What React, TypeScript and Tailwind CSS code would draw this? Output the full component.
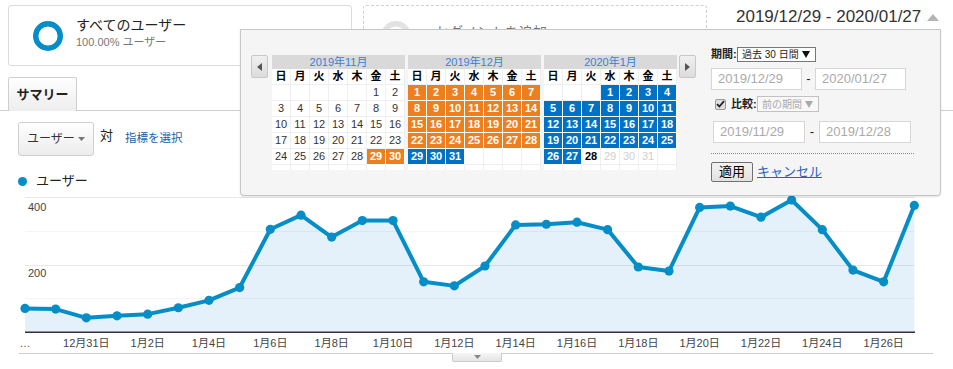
import React from "react"

// daily users for the 30 day window (12/29 - 1/27)
const users = [70, 68, 42, 48, 53, 72, 94, 132, 305, 347, 282, 331, 331, 149, 137, 196, 318, 320, 326, 304, 193, 181, 370, 374, 341, 392, 304, 184, 149, 376]

const X0 = 25
const X1 = 914.3
const BASE = 332
const PER_UNIT = 0.33675

const px = (i: number) => X0 + (i * (X1 - X0)) / (users.length - 1)
const py = (v: number) => BASE - v * PER_UNIT

const dayLabel = (i: number) => (i < 3 ? `12月${29 + i}日` : `1月${i - 2}日`)

type Kind = "blank" | "plain" | "orange" | "blue" | "today" | "future"
type Cell = { d?: number; k: Kind }

function buildMonth(startDow: number, days: number, kind: (d: number) => Kind): Cell[][] {
  const cells: Cell[] = []
  for (let i = 0; i < startDow; i++) cells.push({ k: "blank" })
  for (let d = 1; d <= days; d++) cells.push({ d, k: kind(d) })
  while (cells.length < 35) cells.push({ k: "blank" })
  const rows: Cell[][] = []
  for (let r = 0; r < 5; r++) rows.push(cells.slice(r * 7, r * 7 + 7))
  return rows
}

const months = [
  { title: "2019年11月", rows: buildMonth(5, 30, (d) => (d >= 29 ? "orange" : "plain")) },
  { title: "2019年12月", rows: buildMonth(0, 31, (d) => (d <= 28 ? "orange" : "blue")) },
  {
    title: "2020年1月",
    rows: buildMonth(3, 31, (d) => (d <= 27 ? "blue" : d === 28 ? "today" : "future")),
  },
]

const weekdays = ["日", "月", "火", "水", "木", "金", "土"]

const cellClass: Record<Kind, string> = {
  blank: "bg-white border-[#efefef]",
  plain: "bg-white border-[#efefef] text-[#333]",
  orange: "bg-[#ee7f1f] border-white text-white font-bold",
  blue: "bg-[#0072c6] border-white text-white font-bold",
  today: "bg-white border-[#efefef] text-black font-bold",
  future: "bg-white border-[#efefef] text-[#cfcfcf]",
}

function Month({ title, rows }: { title: string; rows: Cell[][] }) {
  return (
    <div className="w-[133px]">
      <div className="flex h-[14px] items-center justify-center bg-[#d9d9d9] text-[11px] leading-none text-[#3a7fd8]">
        {title}
      </div>
      <div className="grid grid-cols-7">
        {weekdays.map((w) => (
          <div
            key={w}
            className="flex h-[16px] items-center justify-center border-r border-b border-[#efefef] bg-white text-[11px] font-bold leading-none text-black"
          >
            {w}
          </div>
        ))}
        {rows.flat().map((c, i) => (
          <div
            key={i}
            className={`flex h-[16px] items-center justify-center border-r border-b text-[11px] leading-none ${cellClass[c.k]}`}
          >
            {c.d}
          </div>
        ))}
        {weekdays.map((w) => (
          <div key={"e" + w} className="h-[5px] border-r border-[#efefef] bg-white" />
        ))}
      </div>
    </div>
  )
}

function NavButton({ dir }: { dir: "prev" | "next" }) {
  return (
    <div className="flex h-[23px] w-[17px] items-center justify-center rounded-[2px] border border-[#c8c8c8] bg-gradient-to-b from-[#f0f0f0] to-[#dcdcdc]">
      <svg width="5" height="8" viewBox="0 0 5 8">
        {dir === "prev" ? <polygon points="5,0 5,8 0,4" fill="#555" /> : <polygon points="0,0 0,8 5,4" fill="#555" />}
      </svg>
    </div>
  )
}

function Caret({ color }: { color: string }) {
  return (
    <svg width="8" height="7" viewBox="0 0 8 7">
      <polygon points="0,0 8,0 4,7" fill={color} />
    </svg>
  )
}

function DateBox({ value, w }: { value: string; w: string }) {
  return (
    <div className={`flex h-[22px] shrink-0 items-center border border-[#d6d6d6] bg-white pl-[6px] text-[13px] text-[#aaa] ${w}`}>
      {value}
    </div>
  )
}

function DatePicker() {
  return (
    <div className="absolute left-[240px] top-[29px] flex h-[167px] w-[701px] rounded-b-[4px] border border-[#c6c6c6] bg-[#f5f5f5] shadow-[0_1px_2px_rgba(0,0,0,0.12)]">
      <div className="ml-[10px] mt-[25px]">
        <NavButton dir="prev" />
      </div>
      <div className="ml-[4px] mt-[25px] flex gap-[3px]">
        {months.map((m) => (
          <Month key={m.title} title={m.title} rows={m.rows} />
        ))}
      </div>
      <div className="ml-[2px] mt-[25px]">
        <NavButton dir="next" />
      </div>

      <div className="ml-[15px] mt-[17px] flex w-[203px] shrink-0 flex-col whitespace-nowrap text-[11px] text-[#222]">
        <div className="flex h-[15px] items-center">
          <span className="w-[26px] shrink-0 font-bold">期間:</span>
          <div className="flex h-[15px] w-[79px] shrink-0 items-center justify-between border border-[#777] bg-white pl-[4px] pr-[5px] text-[10px]">
            <span>過去 30 日間</span>
            <Caret color="#111" />
          </div>
        </div>

        <div className="mt-[6px] flex items-center">
          <DateBox value="2019/12/29" w="w-[91px]" />
          <span className="w-[13px] shrink-0 text-center text-[13px]">-</span>
          <DateBox value="2020/01/27" w="w-[91px]" />
        </div>

        <div className="mt-[6px] flex h-[16px] items-center">
          <span className="ml-[4px] flex h-[11px] w-[11px] shrink-0 items-center justify-center rounded-[2px] border border-[#9a9a9a] bg-[#dedede]">
            <svg width="9" height="8" viewBox="0 0 9 8">
              <path d="M1 4.2 L3.4 6.5 L8 1.2" fill="none" stroke="#222" strokeWidth="1.8" />
            </svg>
          </span>
          <span className="ml-[5px] w-[26px] shrink-0 font-bold">比較:</span>
          <div className="flex h-[16px] w-[62px] shrink-0 items-center justify-between border border-[#c2c2c2] bg-[#f8f8f8] pl-[4px] pr-[5px] text-[10px] text-[#aaa]">
            <span>前の期間</span>
            <Caret color="#aaa" />
          </div>
        </div>

        <div className="ml-[2px] mt-[9px] flex items-center">
          <DateBox value="2019/11/29" w="w-[92px]" />
          <span className="w-[14px] shrink-0 text-center text-[13px]">-</span>
          <DateBox value="2019/12/28" w="w-[92px]" />
        </div>

        <div className="mt-[10px] border-t border-dotted border-[#8a8a8a]" />

        <div className="mt-[8px] flex items-center">
          <button className="flex h-[20px] w-[42px] items-center justify-center rounded-[2px] border border-[#707070] bg-gradient-to-b from-[#f2f2f2] to-[#e2e2e2] text-[13px] text-black">
            適用
          </button>
          <a className="ml-[4px] text-[13px] text-[#2b5fc4] underline">キャンセル</a>
        </div>
      </div>
    </div>
  )
}

function UsersChart() {
  const pts = users.map((v, i) => [px(i), py(v)] as const)
  const line = pts.map(([x, y]) => `${x},${y}`).join(" ")
  const area = `M${X0},${BASE} L${line.replace(/ /g, " L")} L${X1},${BASE} Z`

  return (
    <svg className="mt-px block" width={953} height={160} viewBox="0 190 953 160">
      <path d={area} fill="#e4f1fa" />
      {[197.5, 265.5].map((y) => (
        <line key={y} x1={X0} x2={X1} y1={y} y2={y} stroke="#000" strokeOpacity={0.09} />
      ))}
      {[231.5, 298.5].map((y) => (
        <line key={y} x1={X0} x2={X1} y1={y} y2={y} stroke="#000" strokeOpacity={0.045} />
      ))}
      <text x={28} y={210.5} fontSize={11} fill="#444">400</text>
      <text x={28} y={277} fontSize={11} fill="#444">200</text>
      <line x1={X0} x2={915} y1={332.3} y2={332.3} stroke="#333" strokeWidth={1.6} />
      <polyline points={line} fill="none" stroke="#058dc7" strokeWidth={4} strokeLinejoin="round" />
      {pts.map(([x, y], i) => (
        <circle key={i} cx={x} cy={y} r={4.6} fill="#058dc7" />
      ))}
      <text x={25} y={347} fontSize={11} fill="#555" textAnchor="middle">…</text>
      {users.map((_, i) =>
        i % 2 === 0 && i > 0 ? (
          <text key={i} x={px(i)} y={347} fontSize={11} fill="#444" textAnchor="middle">
            {dayLabel(i)}
          </text>
        ) : null
      )}
    </svg>
  )
}

export default function App() {
  return (
    <div className="relative h-[369px] w-[953px] overflow-hidden bg-white font-['Liberation_Sans','Noto_Sans_CJK_JP',sans-serif] text-[#333]">
      {/* segments + date range */}
      <div className="flex items-start pl-[8px] pt-[5px]">
        <div className="flex h-[61px] w-[344px] rounded-[3px] border border-[#dcdcdc]">
          <svg className="ml-[23px] mt-[14px]" width="32" height="32" viewBox="0 0 32 32">
            <circle cx="16" cy="16" r="12.3" fill="none" stroke="#058dc7" strokeWidth="5.4" />
          </svg>
          <div className="ml-[12px] mt-[10px]">
            <div className="text-[14px] leading-[18px] text-[#222]">すべてのユーザー</div>
            <div className="mt-[1px] text-[11px] leading-[14px] text-[#777]">100.00% ユーザー</div>
          </div>
        </div>
        <div className="ml-[11px] flex h-[61px] w-[344px] rounded-[3px] border border-dashed border-[#d0d0d0]">
          <svg className="ml-[16px] mt-[14px]" width="32" height="32" viewBox="0 0 32 32">
            <circle cx="16" cy="16" r="12.3" fill="none" stroke="#e2e2e2" strokeWidth="5.4" />
          </svg>
          <div className="ml-[23px] mt-[17px] text-[14px] leading-[18px] text-[#777]">セグメントを追加</div>
        </div>
        <div className="ml-[29px] mt-[2px] flex items-center">
          <span className="text-[17px] leading-[20px] text-[#333]">2019/12/29 - 2020/01/27</span>
          <svg className="ml-[6px]" width="12" height="8" viewBox="0 0 12 8">
            <polygon points="0,8 12,8 6,1" fill="#b4b4b4" />
          </svg>
        </div>
      </div>

      {/* tabs */}
      <div className="mt-[11px] flex border-b border-[#cfcfcf] pl-[8px]">
        <div className="-mb-px flex h-[34px] w-[69px] items-center justify-center rounded-t-[2px] border border-b-0 border-[#cfcfcf] bg-gradient-to-b from-white to-[#ededed] text-[13px] font-bold text-[#222]">
          サマリー
        </div>
      </div>

      {/* metric picker */}
      <div className="ml-[18px] mt-[11px] flex items-center">
        <div className="flex h-[34px] w-[76px] items-center justify-between rounded-[3px] border border-[#cfcfcf] bg-gradient-to-b from-white to-[#ececec] pl-[8px] pr-[8px] text-[12px] text-[#333]">
          <span>ユーザー</span>
          <svg width="7" height="4" viewBox="0 0 7 4">
            <polygon points="0,0 7,0 3.5,4" fill="#777" />
          </svg>
        </div>
        <span className="mb-[7px] ml-[6px] text-[13px] text-[#222]">対</span>
        <a className="ml-[12px] text-[11.5px] text-[#2163a8]">指標を選択</a>
      </div>

      {/* legend */}
      <div className="ml-[18px] mt-[17px] flex h-[16px] items-center">
        <span className="h-[9px] w-[9px] rounded-full bg-[#058dc7]" />
        <span className="ml-[9px] text-[13px] text-[#222]">ユーザー</span>
      </div>

      <UsersChart />

      {/* bottom edge with collapse handle */}
      <div className="ml-[19px] mt-[3px] w-[914px] border-t border-[#cccccc]">
        <div className="-mt-px ml-[433px] flex h-[9px] w-[50px] items-center justify-center rounded-b-[2px] border border-t-0 border-[#cccccc] bg-gradient-to-b from-[#f6f6f6] to-[#e4e4e4]">
          <svg width="7" height="4" viewBox="0 0 7 4">
            <polygon points="0,0 7,0 3.5,4" fill="#888" />
          </svg>
        </div>
      </div>

      <DatePicker />
    </div>
  )
}
